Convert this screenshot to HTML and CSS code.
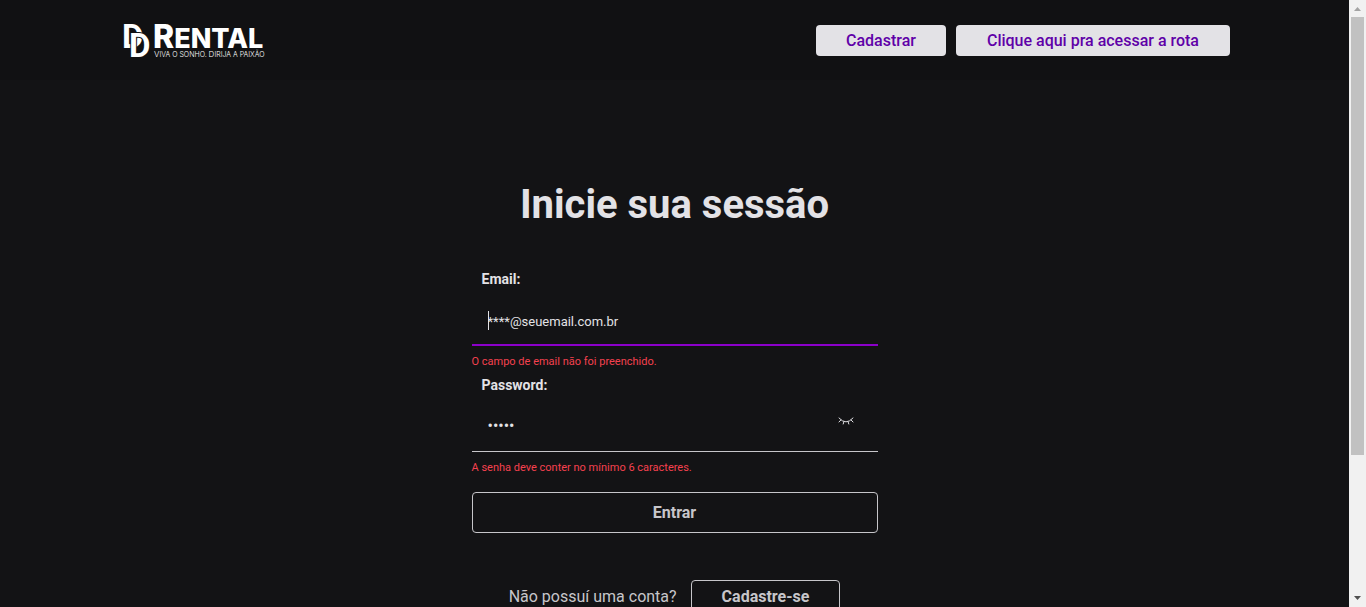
FILE: index.html
```html
<!DOCTYPE html>
<html lang="pt-BR">
<head>
<meta charset="utf-8">
<title>DD Rental</title>
<link rel="stylesheet" href="styles.css">
</head>
<body>
<div class="page">
  <header class="header">
    <div class="header-inner">
      <a class="brand" href="#" aria-label="DD Rental">
        <svg class="logo" width="144" height="40" viewBox="0 0 144 40">
          <g class="mark">
            <text x="-1" y="28">D</text>
            <text class="front" x="6" y="37">D</text>
          </g>
          <text class="name" x="30" y="28"><tspan class="name-cap">R</tspan>ENTAL</text>
          <text class="motto" x="31" y="37"><tspan class="motto-cap">V</tspan>IVA O SONHO. <tspan class="motto-cap">D</tspan>IRIJA A PAIXÃO</text>
        </svg>
      </a>
      <nav class="nav">
        <a class="nav-link" href="#">Cadastrar</a>
        <a class="nav-link nav-link-wide" href="#">Clique aqui pra acessar a rota</a>
      </nav>
    </div>
  </header>
  <main class="main">
    <h1 class="title">Inicie sua sessão</h1>
    <form class="form" novalidate>
      <label class="label" for="email">Email:</label>
      <div class="field field-active">
        <span class="caret"></span>
        <input class="input" id="email" type="email" placeholder="****@seuemail.com.br">
      </div>
      <p class="error">O campo de email não foi preenchido.</p>
      <label class="label" for="password">Password:</label>
      <div class="field">
        <input class="input input-secret" id="password" type="password" value="12345">
        <button class="eye" type="button" aria-label="Mostrar senha">
          <svg width="16" height="16" viewBox="0 0 16 16" fill="none" stroke="currentColor" stroke-linecap="round">
            <path d="M1 5Q8 13 15 5M2.900 7L1 9M5.900 8.700L5.200 11M10.100 8.700L10.800 11M13.100 7L15 9"/>
          </svg>
        </button>
      </div>
      <p class="error">A senha deve conter no mínimo 6 caracteres.</p>
      <button class="submit" type="submit">Entrar</button>
    </form>
    <div class="signup">
      <span>Não possuí uma conta?</span>
      <a class="signup-link" href="#">Cadastre-se</a>
    </div>
  </main>
</div>
<div class="scrollbar" aria-hidden="true">
  <svg class="arrow arrow-up" viewBox="0 0 17 17"><path d="M5 11h7L8.500 7z"/></svg>
  <div class="track"><div class="thumb"></div></div>
  <svg class="arrow" viewBox="0 0 17 17"><path d="M5 6h7L8.500 10z"/></svg>
</div>
</body>
</html>
```
FILE: styles.css
```css
* { box-sizing: border-box; }
body {
  margin: 0;
  height: 100vh;
  display: flex;
  overflow: hidden;
  background: #131315;
  color: #e3e2e6;
  font-family: Roboto, "Liberation Sans", sans-serif;
}
.page { flex: 1; min-width: 0; overflow: hidden; }
.header {
  background: #111113;
  padding: 20px 24px;
}
.header-inner {
  max-width: 1111px;
  margin: 0 auto;
  display: flex;
  align-items: center;
  justify-content: space-between;
}
.brand { display: block; height: 40px; padding-left: 4px; }
.logo { display: block; fill: #fff; overflow: visible; }
.mark { font: 700 33px Roboto, sans-serif; }
.front { stroke: #111113; stroke-width: 2px; paint-order: stroke; }
.name { font: 800 27px Inter, sans-serif; }
.name-cap { font-size: 32px; }
.motto { font: 300 7px Inter, sans-serif; }
.motto-cap { font-size: 8px; }
.nav { display: flex; gap: 10px; }
.nav-link {
  padding: 6px 30px;
  border-radius: 4px;
  background: #e3e2e6;
  color: #5f00a8;
  font-size: 16px;
  font-weight: 500;
  line-height: 19px;
  text-decoration: none;
}
.nav-link-wide { padding: 6px 31px; }
.main {
  display: flex;
  flex-direction: column;
  align-items: center;
  padding-top: 101px;
}
.title { margin: 0; font-size: 40px; font-weight: 700; line-height: 48px; }
.form { width: 406px; max-width: 100%; margin-top: 39px; }
.label {
  display: block;
  padding-left: 10px;
  font-size: 14px;
  font-weight: 700;
  line-height: 22px;
}
.field {
  position: relative;
  display: flex;
  align-items: center;
  height: 56px;
  padding-top: 4px;
  border-bottom: 1px solid #c7c6ca;
}
.field-active { padding-top: 8px; border-bottom: 2px solid #8b00c9; }
.input {
  flex: 1;
  min-width: 0;
  height: 40px;
  padding: 0 16px;
  border: 0;
  outline: 0;
  background: transparent;
  color: inherit;
  font: 400 13px Roboto, sans-serif;
}
.input-secret { font-size: 16px; }
.input::placeholder { color: inherit; opacity: 1; }
.caret {
  position: absolute;
  left: 16px;
  top: 21px;
  width: 1px;
  height: 19px;
  background: #e3e2e6;
}
.eye {
  width: 16px;
  height: 16px;
  margin-right: 24px;
  margin-bottom: 10px;
  padding: 0;
  border: 0;
  background: none;
  color: #e3e2e6;
}
.eye svg { display: block; }
.error { margin: 0; padding: 9px 0 5px; font-size: 11px; line-height: 14px; color: #f5414f; }
.submit {
  display: block;
  width: 100%;
  height: 41px;
  margin-top: 12px;
  border: 1px solid #c7c6ca;
  border-radius: 4px;
  background: transparent;
  color: #c7c6ca;
  font: 700 16px Roboto, sans-serif;
}
.signup {
  display: flex;
  align-items: center;
  gap: 14px;
  margin-top: 47px;
  color: #c7c6ca;
  font-size: 16px;
}
.signup-link {
  padding: 6px 30px;
  border: 1px solid #c7c6ca;
  border-radius: 4px;
  color: inherit;
  font-weight: 700;
  line-height: 19px;
  text-decoration: none;
}
.scrollbar { width: 17px; display: flex; flex-direction: column; background: #f1f1f1; }
.arrow { width: 17px; height: 17px; fill: #505050; }
.arrow-up { fill: #a3a3a3; }
.track { flex: 1; padding: 0 2px; }
.thumb { height: 76.5%; background: #c1c1c1; }
```
